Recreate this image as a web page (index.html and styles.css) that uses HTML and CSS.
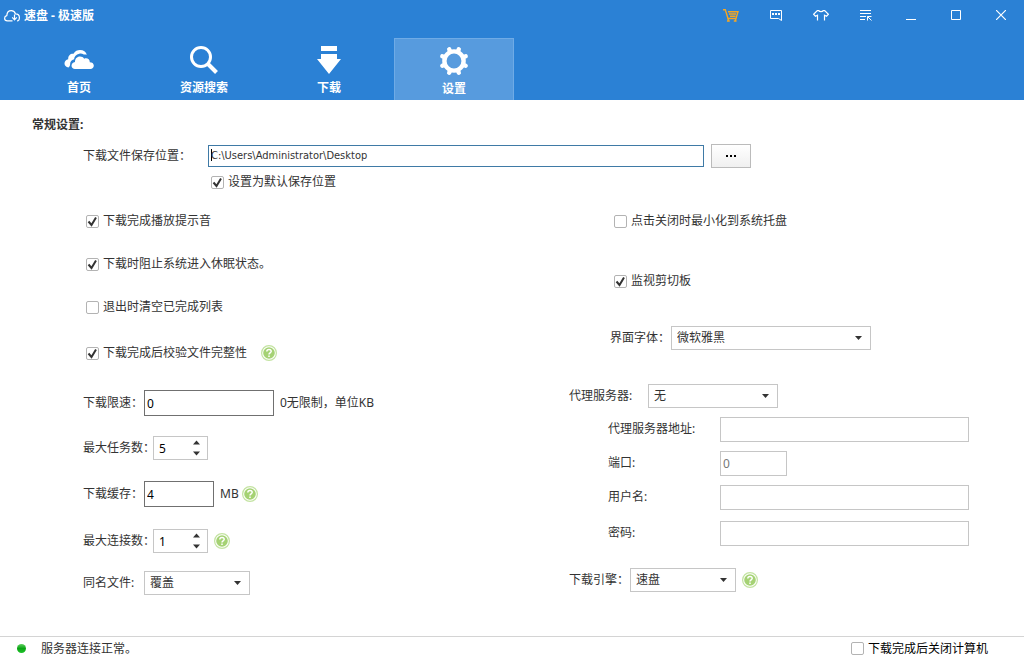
FILE: index.html
```
<!DOCTYPE html>
<html lang="zh-CN">
<head>
  <meta charset="UTF-8">
  <meta name="viewport" content="width=device-width, initial-scale=1.0">
  <title>速盘 - 极速版</title>
  <link rel="stylesheet" href="styles.css">
</head>
<body>
  <svg class="sprite" aria-hidden="true">
    <symbol id="icon-help" viewBox="0 0 16 16">
      <circle cx="8" cy="8" r="7.4" fill="#fff" stroke="#c3e3a1" stroke-width="1.2"/>
      <circle cx="8" cy="8" r="5.8" fill="#a5d274"/>
      <path d="M5.800 6.600c0-3 4.400-2.800 4.400-.3 0 1.500-2.200 1.500-2.200 3.200M8 10.400v1.500" fill="none" stroke="#fff" stroke-width="1.5"/>
    </symbol>
  </svg>

  <header class="header">
    <div class="titlebar">
      <h1 class="title">
        <svg width="16" height="12" viewBox="0 0 16 12" fill="none" stroke="#fff" stroke-width="1.2">
          <path d="M8.500 10.900H3.500C1.700 10.900.6 9.700.6 8.200c0-1.300.9-2.300 2.200-2.600C3 2.700 4.700.7 7.300.7c2.100 0 3.600 1.200 4.100 3.100C13.900 3.700 15.400 5.300 15.400 7.400c0 2-1 3.500-2.400 3.500"/>
          <path d="M10.500 4.500v5M8.200 7.400l2.300 2.400 2.300-2.400"/>
        </svg>
        速盘 - 极速版
      </h1>
      <div class="window-buttons">
        <button aria-label="购物车">
          <svg width="16" height="13" viewBox="0 0 16 13" fill="none" stroke="#f5a623" stroke-width="1.4">
            <path d="M0 .8h2.300l2.700 8.700h8L15 2.700H5M6 5h7M7 7.300h5.500"/>
            <path d="M5.500 9.500l-.7 2.500h2M12.500 9.500l.3 2.500h-2" stroke-width="1.5"/>
          </svg>
        </button>
        <button aria-label="消息">
          <svg width="12" height="11" viewBox="0 0 12 11" fill="none" stroke="#fff">
            <path d="M.5.5h11v10l-3-2h-8z"/>
            <path d="M2 4h2M5 4h2M8 4h2" stroke-width="2"/>
          </svg>
        </button>
        <button aria-label="皮肤">
          <svg width="16" height="11" viewBox="0 0 16 11" fill="none" stroke="#fff" stroke-width="1.2">
            <path d="M4.500 10.500V5.300L2.500 6.200.6 4.200 4.300.6h1.500C6.600 2 9.400 2 10.200.6h1.500l3.700 3.600-1.900 2-2-.9v5.200"/>
          </svg>
        </button>
        <button aria-label="菜单">
          <svg width="12" height="11" viewBox="0 0 12 11" fill="none" stroke="#fff">
            <path d="M0 .5h11M0 3.500h11M0 6.500h6M0 9.500h5M7.500 10.500v-4h4M7.500 6.500l4 4"/>
          </svg>
        </button>
        <button aria-label="最小化">
          <svg width="10" height="10" viewBox="0 0 10 10" stroke="#fff"><path d="M0 9.500h10"/></svg>
        </button>
        <button aria-label="最大化">
          <svg width="10" height="10" viewBox="0 0 10 10" fill="none" stroke="#fff"><path d="M.5.5h9v9h-9z"/></svg>
        </button>
        <button aria-label="关闭">
          <svg width="10" height="10" viewBox="0 0 10 10" stroke="#fff" stroke-width="1.2"><path d="M0 0l10 10M10 0L0 10"/></svg>
        </button>
      </div>
    </div>

    <nav class="tabs">
      <a class="tab" href="#home">
        <svg width="30" height="30" viewBox="0 0 30 30" fill="#fff">
          <path d="M4.500 22.500C2 22 .5 20.500 .5 18.500c0-2.200 1.500-3.900 3.700-4.300C4 10.500 6.500 8.500 9.500 8.800 11 6 13.500 5 16 5c3.500 0 6 2 6.800 4.800-1-.4-2-.5-3-.3-1.500-.9-3-1.200-4.500-.8-3.200.5-5 2.800-5.200 5.600-2.600.7-4 2.600-4 5 0 1.500-.5 2.300-1.600 3.200z"/>
          <path d="M11 24c-2 0-3.500-1.400-3.500-3.300 0-2 1.400-3.500 3.500-3.800 0-3.200 2-5.500 5-5.500 1.900 0 3.300.9 4.200 2.300 3-1.100 5.600.6 5.600 3.600 2.200 0 4 1.200 4 3.300S28.300 24 26.500 24z"/>
        </svg>
        首页
      </a>
      <a class="tab" href="#search">
        <svg width="30" height="30" viewBox="0 0 30 30" fill="none" stroke="#fff">
          <circle cx="12" cy="12" r="9.500" stroke-width="3"/>
          <path d="M18.500 18.500l9 9" stroke-width="4"/>
        </svg>
        资源搜索
      </a>
      <a class="tab" href="#download">
        <svg width="30" height="30" viewBox="0 0 30 30" fill="#fff">
          <path d="M7 1h16v5H7zM7 9h16v5h4L15 29 3 14h4z"/>
        </svg>
        下载
      </a>
      <a class="tab active" href="#settings">
        <svg width="30" height="30" viewBox="-15 -15 30 30" fill="none" stroke="#fff">
          <circle r="9.600" stroke-width="4.400"/>
          <g stroke-width="4.400" stroke-linecap="round">
            <path d="M3.800 -9.200l1 -2.500M9.200 -3.800l2.500 -1M9.200 3.800l2.500 1M3.800 9.200l1 2.500M-3.800 9.200l-1 2.500M-9.200 3.800l-2.500 1M-9.200 -3.800l-2.500 -1M-3.800 -9.200l-1 -2.500"/>
          </g>
        </svg>
        设置
      </a>
    </nav>
  </header>

  <main class="settings">
    <h2>常规设置:</h2>

    <div class="path-row">
      <label for="save-path">下载文件保存位置：</label>
      <input type="text" id="save-path" class="path-input" value="C:\Users\Administrator\Desktop">
      <button class="browse" aria-label="浏览">
        <svg width="10" height="2" viewBox="0 0 10 2"><path d="M0 0h2v2H0zM4 0h2v2H4zM8 0h2v2H8z"/></svg>
      </button>
    </div>
    <label class="check default-path"><input type="checkbox" checked>设置为默认保存位置</label>

    <div class="columns">
      <div class="column-left">
        <div class="row inset"><label class="check"><input type="checkbox" checked>下载完成播放提示音</label></div>
        <div class="row inset"><label class="check"><input type="checkbox" checked>下载时阻止系统进入休眠状态。</label></div>
        <div class="row inset"><label class="check"><input type="checkbox">退出时清空已完成列表</label></div>
        <div class="row inset">
          <label class="check"><input type="checkbox" checked>下载完成后校验文件完整性</label>
          <svg class="help help-far"><use href="#icon-help"/></svg>
        </div>
        <div class="row">
          <label class="name" for="speed">下载限速：</label>
          <input type="text" id="speed" class="box w-130" value="0">
          <span class="unit">0无限制，单位KB</span>
        </div>
        <div class="row">
          <label class="name long" for="tasks">最大任务数：</label>
          <input type="number" id="tasks" class="spin" value="5" min="1">
        </div>
        <div class="row">
          <label class="name" for="cache">下载缓存：</label>
          <input type="text" id="cache" class="box w-70" value="4">
          <span class="unit">MB</span>
          <svg class="help help-near"><use href="#icon-help"/></svg>
        </div>
        <div class="row">
          <label class="name long" for="links">最大连接数：</label>
          <input type="number" id="links" class="spin" value="1" min="1">
          <svg class="help"><use href="#icon-help"/></svg>
        </div>
        <div class="row">
          <label class="name" for="same-name">同名文件:</label>
          <select id="same-name" class="w-106"><option>覆盖</option></select>
        </div>
      </div>

      <div class="column-right">
        <div class="row indent"><label class="check"><input type="checkbox">点击关闭时最小化到系统托盘</label></div>
        <div class="row indent"><label class="check"><input type="checkbox" checked>监视剪切板</label></div>
        <div class="row indent">
          <label class="name font-name" for="font">界面字体：</label>
          <select id="font" class="w-200"><option>微软雅黑</option></select>
        </div>
        <div class="row row-proxy">
          <label class="name proxy-name" for="proxy">代理服务器:</label>
          <select id="proxy" class="w-130"><option>无</option></select>
        </div>
        <div class="row indent">
          <label class="name proxy-field" for="proxy-host">代理服务器地址:</label>
          <input type="text" id="proxy-host" class="line">
        </div>
        <div class="row indent">
          <label class="name proxy-field" for="proxy-port">端口:</label>
          <input type="text" id="proxy-port" class="line port" value="0">
        </div>
        <div class="row indent">
          <label class="name proxy-field" for="proxy-user">用户名:</label>
          <input type="text" id="proxy-user" class="line">
        </div>
        <div class="row indent">
          <label class="name proxy-field" for="proxy-pass">密码:</label>
          <input type="password" id="proxy-pass" class="line">
        </div>
        <div class="row">
          <label class="name" for="engine">下载引擎：</label>
          <select id="engine" class="w-106"><option>速盘</option></select>
          <svg class="help"><use href="#icon-help"/></svg>
        </div>
      </div>
    </div>
  </main>

  <footer class="statusbar">
    <span class="status-dot"></span>
    <span>服务器连接正常。</span>
    <label class="check shutdown"><input type="checkbox">下载完成后关闭计算机</label>
  </footer>
</body>
</html>
```

FILE: styles.css
```
* {
  box-sizing: border-box;
}

body {
  margin: 0;
  min-height: 100vh;
  display: flex;
  flex-direction: column;
  background: #fff;
  color: #333;
  font-family: "Noto Sans", "Noto Sans CJK SC", sans-serif;
  font-size: 12px;
  line-height: 18px;
}

input, select, button {
  font: inherit;
  color: inherit;
  margin: 0;
}

.sprite {
  display: none;
}

/* header */
.header {
  background: #2b81d5;
  color: #fff;
}

.titlebar {
  height: 38px;
  display: flex;
  justify-content: space-between;
  padding: 0 1px 0 4px;
}

.title {
  display: flex;
  align-items: center;
  gap: 4px;
  height: 31px;
  margin: 0;
  font-size: 12px;
  font-weight: bold;
}

.window-buttons {
  display: flex;
  height: 30px;
}

.window-buttons button {
  width: 45px;
  display: flex;
  align-items: center;
  justify-content: center;
  padding: 0;
  background: none;
  border: none;
}

.tabs {
  display: flex;
  gap: 5px;
  padding-left: 19px;
}

.tab {
  width: 120px;
  height: 62px;
  display: flex;
  flex-direction: column;
  align-items: center;
  gap: 4px;
  padding-top: 6px;
  border: 1px solid transparent;
  border-bottom: none;
  color: #fff;
  font-weight: bold;
  text-decoration: none;
}

.tab.active {
  padding-top: 7px;
  background: #579bde;
  border-color: #6fabe6;
}

/* settings */
.settings {
  flex: 1;
  padding: 16px 55px 16px 83px;
}

h2 {
  margin: 0 0 10px -51px;
  font-size: 12px;
  line-height: 18px;
  font-weight: bold;
}

.path-row {
  display: flex;
  align-items: center;
}

.path-row label {
  width: 125px;
}

.path-input {
  width: 56%;
  height: 22px;
  padding: 0 2px 2px;
  border: 1px solid #3f7aa6;
  font-family: "DejaVu Sans Condensed", "Noto Sans", sans-serif;
  font-size: 11px;
  /* text cursor at the start of the path */
  background: linear-gradient(#000, #000) 2px 3px / 1px 12px no-repeat;
}

.browse {
  width: 40px;
  height: 24px;
  display: flex;
  align-items: center;
  justify-content: center;
  margin-left: 7px;
  padding: 0;
  background: linear-gradient(#fff, #f0f0f0);
  border: 1px solid #bbb;
}

.check {
  display: flex;
  align-items: center;
  gap: 4px;
}

.check input {
  appearance: none;
  width: 13px;
  height: 13px;
  border: 1px solid #b3b3b3;
  border-radius: 2px;
  background: #fff;
}

.check input:checked {
  background: #fff url("data:image/svg+xml,%3Csvg xmlns='http://www.w3.org/2000/svg' viewBox='0 0 11 11'%3E%3Cpath d='M1.500 5.500l3 3.500 4.500-7.500' fill='none' stroke='%23333' stroke-width='2'/%3E%3C/svg%3E") center / 11px 11px no-repeat;
}

.default-path {
  margin: 5px 0 9px 128px;
}

.columns {
  display: grid;
  grid-template-columns: minmax(486px, 1.2fr) 1fr;
}

.column-left,
.column-right {
  display: grid;
  align-content: start;
}

.column-left {
  grid-template-rows: 42px 44px 42px 50px 50px 40px 52px 42px 42px;
}

.column-right {
  grid-template-rows: 42px 78px 36px 56px 34px 34px 34px 38px 56px;
}

.row {
  display: flex;
  align-items: center;
}

.row-proxy {
  padding-top: 24px;
}

.inset {
  padding-left: 3px;
}

.indent {
  padding-left: 39px;
}

.indent .check {
  padding-left: 6px;
}

.name {
  width: 61px;
  white-space: nowrap;
}

.name.long {
  width: 70px;
}

.name.font-name {
  width: 63px;
  padding-left: 2px;
}

.name.proxy-name {
  width: 79px;
}

.name.proxy-field {
  width: 112px;
}

.box,
.line,
.spin,
select {
  height: 24px;
  border: 1px solid #c6c6c6;
  border-radius: 0;
  background: #fff;
}

.box {
  height: 26px;
  padding: 0 2px;
  border-color: #707070;
  color: #000;
}

.line {
  flex: 1;
  min-width: 0;
  height: 25px;
  padding: 0 2px;
}

.line.port {
  flex: none;
  width: 67px;
  color: #777;
}

.spin {
  appearance: textfield;
  width: 55px;
  padding: 0 5px;
  color: #000;
  background: url("data:image/svg+xml,%3Csvg xmlns='http://www.w3.org/2000/svg' viewBox='0 0 7 16'%3E%3Cpath d='M0 4.500L3.500.5 7 4.500zM0 11.500L3.500 15.500 7 11.500z' fill='%23333'/%3E%3C/svg%3E") right 7px center / 7px 16px no-repeat;
}

.spin::-webkit-inner-spin-button {
  appearance: none;
}

select {
  appearance: none;
  padding: 0 20px 0 5px;
  background: url("data:image/svg+xml,%3Csvg xmlns='http://www.w3.org/2000/svg' viewBox='0 0 7 4'%3E%3Cpath d='M0 0h7L3.500 4z' fill='%23333'/%3E%3C/svg%3E") right 8px center / 7px 4px no-repeat;
}

.w-70 {
  width: 70px;
}

.w-106 {
  width: 106px;
}

.w-130 {
  width: 130px;
}

.w-200 {
  width: 200px;
}

.unit {
  margin-left: 6px;
}

.help {
  width: 16px;
  height: 16px;
  margin-left: 6px;
}

.help-near {
  margin-left: 3px;
}

.help-far {
  margin-left: 14px;
}

/* status bar */
.statusbar {
  height: 24px;
  display: flex;
  align-items: center;
  padding: 0 36px 0 17px;
  border-top: 1px solid #d4d4d4;
}

.status-dot {
  width: 9px;
  height: 9px;
  margin-right: 15px;
  border-radius: 50%;
  background: linear-gradient(#5fd05f, #0aa414 50%, #1fc32b);
}

.shutdown {
  margin-left: auto;
  color: #000;
}
```
